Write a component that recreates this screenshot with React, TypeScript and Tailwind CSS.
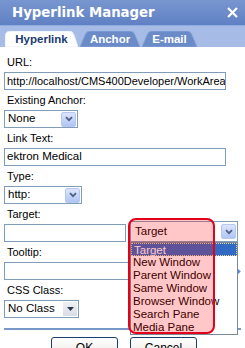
import { ReactNode } from "react";

const font = "font-['Liberation_Sans',Arial,sans-serif]";

function Chevron() {
  return (
    <svg width="8" height="6" viewBox="0 0 8 6">
      <path d="M1 1.2 L4 4.2 L7 1.2" fill="none" stroke="#4d6185" strokeWidth="1.8" />
    </svg>
  );
}

function XpArrow() {
  return (
    <div className="flex h-[15px] w-[15px] items-center justify-center rounded-[2px] border border-[#b6c8f2] bg-gradient-to-b from-[#dbe5fc] to-[#b0c5f4]">
      <Chevron />
    </div>
  );
}

function ClassicArrow() {
  return (
    <div className="flex h-[14px] w-[14px] items-center justify-center bg-gradient-to-b from-[#eef0f4] to-[#d9dde6]">
      <svg width="7" height="4" viewBox="0 0 7 4">
        <path d="M0 0 H7 L3.5 4 Z" fill="#2a3550" />
      </svg>
    </div>
  );
}

function Select({
  width,
  value,
  classic,
}: {
  width: string;
  value: string;
  classic?: boolean;
}) {
  return (
    <div
      className={`flex h-[18px] items-center justify-between border border-[#7f9db9] bg-white pl-[3px] pr-[1px] text-[11.5px] text-black ${width}`}
    >
      <span>{value}</span>
      {classic ? <ClassicArrow /> : <XpArrow />}
    </div>
  );
}

function Label({ children }: { children: ReactNode }) {
  return (
    <div className="h-[13px] pl-[3px] text-[11px] leading-[13px] text-black">
      {children}
    </div>
  );
}

function Tab({
  width,
  label,
  active,
}: {
  width: number;
  label: string;
  active?: boolean;
}) {
  const h = 16;
  const d = active
    ? `M0 ${h} L0 6 Q0 0 6 0 L${width - 9} 0 Q${width - 5} 0 ${width - 4} 4 L${width} ${h} Z`
    : `M0 ${h} L5 4 Q6.5 0 10 0 L${width - 10} 0 Q${width - 6.5} 0 ${width - 5} 4 L${width} ${h} Z`;
  return (
    <div
      className="relative flex h-[16px] items-center justify-center"
      style={{ width }}
    >
      <svg
        className="absolute inset-0"
        width={width}
        height={h}
        viewBox={`0 0 ${width} ${h}`}
      >
        <path
          d={d}
          fill={active ? "#ffffff" : "#6a8bc8"}
          stroke={active ? "#e8eefa" : "#86a2d6"}
          strokeWidth="1"
        />
      </svg>
      <span
        className={`relative pt-[1px] text-[11.5px] font-bold ${
          active ? "text-[#1c3a72]" : "text-white"
        }`}
      >
        {label}
      </span>
    </div>
  );
}

const options = [
  "Target",
  "New Window",
  "Parent Window",
  "Same Window",
  "Browser Window",
  "Search Pane",
  "Media Pane",
];

export default function App() {
  return (
    <div className={`h-[348px] w-[245px] overflow-hidden bg-white ${font}`}>
      {/* Title */}
      <div className="flex h-[25px] items-center justify-between bg-gradient-to-b from-[#7896d0] to-[#5f80c3] pl-[12px] pr-[7px]">
        <span className="font-['DejaVu_Sans',Verdana,sans-serif] text-[13.3px] font-bold text-white">
          Hyperlink Manager
        </span>
        <svg width="11" height="11" viewBox="0 0 11 11">
          <path d="M1 1 L10 10 M10 1 L1 10" stroke="#fff" strokeWidth="2.2" />
        </svg>
      </div>

      {/* Tabs */}
      <div className="flex h-[22px] items-end gap-[2px] border-t border-[#90abdd] bg-[#a6bce6] pl-[5px]">
        <Tab width={73} label="Hyperlink" active />
        <Tab width={60} label="Anchor" />
        <Tab width={55} label="E-mail" />
      </div>

      {/* Body */}
      <div className="flex flex-col px-[4px] pt-[9px]">
        <Label>URL:</Label>
        <div className="mt-[3px] flex h-[18px] w-[222px] items-center overflow-hidden whitespace-nowrap border border-[#7f9db9] pl-[2px] text-[11px] text-black">
          http://localhost/CMS400Developer/WorkArea
        </div>

        <div className="mt-[4px]">
          <Label>Existing Anchor:</Label>
        </div>
        <div className="mt-[3px]">
          <Select width="w-[74px]" value="None" />
        </div>

        <div className="mt-[4px]">
          <Label>Link Text:</Label>
        </div>
        <div className="mt-[3px] flex h-[18px] w-[222px] items-center border border-[#7f9db9] pl-[2px] text-[11.5px] text-black">
          ektron Medical
        </div>

        <div className="mt-[4px]">
          <Label>Type:</Label>
        </div>
        <div className="mt-[3px]">
          <Select width="w-[78px]" value="http:" />
        </div>

        <div className="mt-[4px]">
          <Label>Target:</Label>
        </div>
        <div className="flex items-end">
          <div className="h-[18px] w-[122px] border border-[#7f9db9]" />
          <div className="relative ml-[4px]">
            <div className="flex h-[21px] w-[108px] items-center justify-between border border-[#7f9db9] bg-white pl-[4px] pr-[1px] text-[11.5px] text-black">
              <span>Target</span>
              <XpArrow />
            </div>
            {/* open list */}
            <div className="absolute left-0 top-[21px] z-10 w-[108px] border border-[#7a8699] bg-white">
              {options.map((o, i) => (
                <div
                  key={o}
                  className={`h-[13px] pl-[2px] text-[11.5px] leading-[13px] ${
                    i === 0
                      ? "border border-dotted border-[#e8d88a] bg-[#316ac5] pl-[1px] leading-[11px] text-white"
                      : "text-black"
                  }`}
                >
                  {o}
                </div>
              ))}
            </div>
            {/* highlight */}
            <div className="absolute left-[-2px] top-[-3px] z-20 h-[116px] w-[87px] rounded-[8px] border-2 border-[#e3001b] bg-[#ff0000]/[0.22]" />
          </div>
        </div>

        <div className="mt-[4px]">
          <Label>Tooltip:</Label>
        </div>
        <div className="mt-[3px] flex items-center">
          <div className="h-[18px] w-[222px] border border-[#7f9db9]" />
          <svg className="ml-[12px]" width="7" height="7" viewBox="0 0 7 7">
            <path d="M0 2 H3 V0 L7 3.5 L3 7 V5 H0 Z" fill="#5a8be0" />
          </svg>
        </div>

        <div className="mt-[4px]">
          <Label>CSS Class:</Label>
        </div>
        <div className="mt-[3px]">
          <Select width="w-[75px]" value="No Class" classic />
        </div>

        <div className="mt-[10px] h-[2px] w-[237px] bg-[#7898cc]" />

        <div className="mt-[7px] flex gap-[12px] pl-[47px]">
          <button className="h-[22px] w-[67px] rounded-[3px] border border-[#1d3d6e] bg-gradient-to-b from-white to-[#e6e6df] text-[12px] text-black">
            OK
          </button>
          <button className="h-[22px] w-[67px] rounded-[3px] border border-[#1d3d6e] bg-gradient-to-b from-white to-[#e6e6df] text-[12px] text-black">
            Cancel
          </button>
        </div>
      </div>
    </div>
  );
}
